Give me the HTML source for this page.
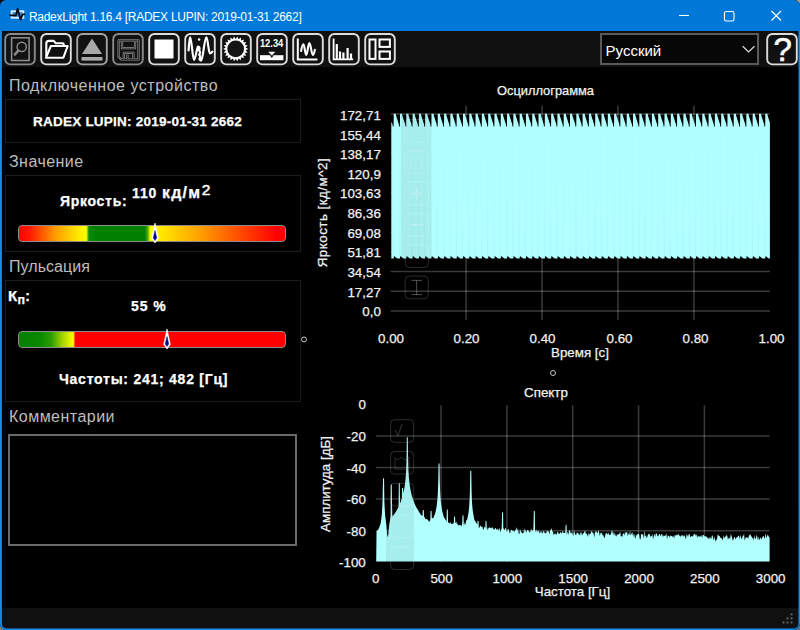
<!DOCTYPE html>
<html lang="ru">
<head>
<meta charset="utf-8">
<title>RadexLight 1.16.4 [RADEX LUPIN: 2019-01-31 2662]</title>
<style>
html,body{margin:0;padding:0;width:800px;height:630px;overflow:hidden;background:#3a3a3a;}
body{font-family:"Liberation Sans",sans-serif;color:#fff;position:relative;}
#win{position:absolute;left:0;top:0;width:800px;height:630px;background:#000;border-radius:6px;overflow:hidden;}
#frame{position:absolute;left:0;top:0;z-index:50;pointer-events:none;}
.cn{position:absolute;width:10px;height:10px;}
#titlebar{position:absolute;left:0;top:0;width:800px;height:31px;background:#0078d7;border-bottom:0.5px solid #0a4a80}
#title{position:absolute;left:28.9px;top:8.5px;font-size:12px;line-height:16px;white-space:nowrap;color:#fff;letter-spacing:-0.27px;}
.abs{position:absolute;white-space:nowrap;}
#toolbar{position:absolute;left:1px;top:31px;width:798px;height:35.6px;background:#101010;}
.tb{position:absolute;top:33px;width:33px;height:33px;}
#combo{position:absolute;left:600px;top:33px;width:155px;height:28px;border:2px solid #595959;background:#070707;}
#combo span{position:absolute;left:3.6px;top:7px;font-size:15px;line-height:18px;color:#fff;}
.hdr{position:absolute;left:9px;font-size:16px;line-height:20px;color:#bdbdbd;white-space:nowrap;}
.grp{position:absolute;left:5px;width:294px;border:1px solid #1c1c1c;}
.b{font-weight:700;color:#fff;-webkit-text-stroke:0.25px #fff;}
.bar{position:absolute;left:18px;width:266px;height:15px;border:1.5px solid #8c8c8c;border-radius:4px;}
#status{position:absolute;left:1px;top:607.5px;width:798px;height:22px;background:#101010;}
#comment{position:absolute;left:8px;top:434px;width:284.5px;height:107.5px;border:2px solid #6a6a6a;}
svg text{font-family:"Liberation Sans",sans-serif;}
#charts text{stroke:#f2f2f2;stroke-width:0.25px;}
</style>
</head>
<body>
<div class="cn" style="left:0;top:0;background:#0a0a0a"></div><div class="cn" style="right:0;top:0;background:#b89a78"></div><div class="cn" style="left:0;bottom:0;background:#8a8078"></div><div class="cn" style="right:0;bottom:0;background:#6a7480"></div>
<div id="win">
<div id="titlebar"></div>
<svg class="abs" style="left:0;top:0" width="800" height="32" viewBox="0 0 800 32"><rect x="11.6" y="11.2" width="11.8" height="6.6" fill="#ffffff" fill-opacity="0.18" stroke="#dcecfc" stroke-width="1.8"/><path d="M9.4 15.3 H16 L17.6 8.8 L20.5 19.6 L22.6 14.4 H25" fill="none" stroke="#0a0a14" stroke-width="1.8" stroke-linejoin="round"/><path d="M679 15.5 H689" stroke="#fff" stroke-width="1"/><rect x="724.5" y="11.5" width="9.5" height="9.5" rx="1.8" fill="none" stroke="#fff" stroke-width="1.1"/><path d="M771.5 11 L781 20.5 M781 11 L771.5 20.5" stroke="#fff" stroke-width="1.1"/></svg>
<div id="title">RadexLight 1.16.4 [RADEX LUPIN: 2019-01-31 2662]</div>
<div id="toolbar"></div>
<svg class="tb" style="left:4px" width="33" height="33" viewBox="0 0 33 33"><rect x="1.2" y="1" width="29.6" height="30.4" rx="5.2" fill="#111" stroke="#8a8a8a" stroke-width="1.9"/><rect x="7.6" y="4.8" width="17.5" height="22.7" fill="none" stroke="#8a8a8a" stroke-width="1.6"/><circle cx="17.7" cy="13.9" r="4.6" fill="none" stroke="#8a8a8a" stroke-width="1.5"/><path d="M14.4 17.4 L10.8 21.6" stroke="#8a8a8a" stroke-width="2.4" stroke-linecap="round" fill="none"/></svg>
<svg class="tb" style="left:40px" width="33" height="33" viewBox="0 0 33 33"><rect x="1.2" y="1" width="29.6" height="30.4" rx="5.2" fill="#111" stroke="#dcdcdc" stroke-width="1.9"/><path d="M6.3 23.2 V10.4 Q6.3 7.9 9 7.9 H13.8 L15.8 10.3 H22.8 Q23.7 10.3 23.7 11.2 V12.6" fill="none" stroke="#fff" stroke-width="2.1" stroke-linejoin="round"/><path d="M5.9 24.8 L10.9 13 H27.7 L23.3 24.8 Z" fill="none" stroke="#fff" stroke-width="2.1" stroke-linejoin="round"/></svg>
<svg class="tb" style="left:76px" width="33" height="33" viewBox="0 0 33 33"><rect x="1.2" y="1" width="29.6" height="30.4" rx="5.2" fill="#111" stroke="#a2a2a2" stroke-width="1.9"/><path d="M16 5.5 L26 21 H6 Z" fill="#a8a8a8"/><rect x="5.5" y="24" width="21" height="3.6" fill="#a8a8a8"/></svg>
<svg class="tb" style="left:112px" width="33" height="33" viewBox="0 0 33 33"><rect x="1.2" y="1" width="29.6" height="30.4" rx="5.2" fill="#111" stroke="#8a8a8a" stroke-width="1.9"/><path d="M6.6 7.3 H26.5 V26.5 H9.2 L6.6 23.9 Z" fill="none" stroke="#909090" stroke-width="2.2" stroke-linejoin="round"/><path d="M10 7.3 V15.2 H23 V7.3" fill="none" stroke="#909090" stroke-width="2.2" stroke-linejoin="round"/><path d="M11.8 26.5 V19.8 H21.4 V26.5" fill="none" stroke="#909090" stroke-width="2.2" stroke-linejoin="round"/><path d="M15.4 21.4 V26.5" fill="none" stroke="#909090" stroke-width="2.2" stroke-linejoin="round"/><path d="M6.6 7.3 H26.5 V26.5 H9.2 L6.6 23.9 Z" fill="none" stroke="#1a1a1a" stroke-width="0.8" stroke-linejoin="round"/><path d="M10 7.3 V15.2 H23 V7.3" fill="none" stroke="#1a1a1a" stroke-width="0.8" stroke-linejoin="round"/><path d="M11.8 26.5 V19.8 H21.4 V26.5" fill="none" stroke="#1a1a1a" stroke-width="0.8" stroke-linejoin="round"/><path d="M15.4 21.4 V26.5" fill="none" stroke="#1a1a1a" stroke-width="0.8" stroke-linejoin="round"/></svg>
<svg class="tb" style="left:148px" width="33" height="33" viewBox="0 0 33 33"><rect x="1.2" y="1" width="29.6" height="30.4" rx="5.2" fill="#111" stroke="#dcdcdc" stroke-width="1.9"/><rect x="6.5" y="6.5" width="19" height="19" fill="#fff"/></svg>
<svg class="tb" style="left:184px" width="33" height="33" viewBox="0 0 33 33"><rect x="1.2" y="1" width="29.6" height="30.4" rx="5.2" fill="#111" stroke="#dcdcdc" stroke-width="1.9"/><path d="M4.6 17.5 C5.2 10 5.4 4.4 6.2 4.4 C7.6 4.4 8.6 27 10 27 C11.4 27 12.4 16.5 14 13.6 C16 14 16 16.2 14.6 17.2 C16.4 17.8 16.6 20.6 15 21.6 C16.4 22.4 16.4 25 15.4 26 C15.8 27.2 16.4 27.6 17.1 27.6 C19 27.6 20.4 4.4 22.3 4.4 C24 4.4 24.4 20.4 26 20.4 C27.2 20.4 27.6 19.6 28.3 18.6" fill="none" stroke="#fff" stroke-width="2.2" stroke-linecap="round" stroke-linejoin="round"/><circle cx="15.1" cy="6.6" r="1.25" fill="#fff"/></svg>
<svg class="tb" style="left:220px" width="33" height="33" viewBox="0 0 33 33"><rect x="1.2" y="1" width="29.6" height="30.4" rx="5.2" fill="#111" stroke="#dcdcdc" stroke-width="1.9"/><path d="M28.20 15.90 L25.60 17.32 L27.69 19.42 L24.80 20.05 L26.22 22.66 L23.26 22.45 L23.89 25.35 L21.11 24.31 L20.89 27.27 L18.52 25.49 L17.48 28.27 L15.70 25.90 L13.92 28.27 L12.88 25.49 L10.51 27.27 L10.29 24.31 L7.51 25.35 L8.14 22.45 L5.18 22.66 L6.60 20.05 L3.71 19.42 L5.80 17.32 L3.20 15.90 L5.80 14.48 L3.71 12.38 L6.60 11.75 L5.18 9.14 L8.14 9.35 L7.51 6.45 L10.29 7.49 L10.51 4.53 L12.88 6.31 L13.92 3.53 L15.70 5.90 L17.48 3.53 L18.52 6.31 L20.89 4.53 L21.11 7.49 L23.89 6.45 L23.26 9.35 L26.22 9.14 L24.80 11.75 L27.69 12.38 L25.60 14.48 Z" fill="#fff"/><circle cx="15.7" cy="15.9" r="8.4" fill="#141414"/></svg>
<svg class="tb" style="left:256px" width="33" height="33" viewBox="0 0 33 33"><rect x="1.2" y="1" width="29.6" height="30.4" rx="5.2" fill="#111" stroke="#dcdcdc" stroke-width="1.9"/><text x="15.6" y="13.7" font-size="10.8" font-weight="700" fill="#fff" text-anchor="middle" textLength="23.4" lengthAdjust="spacingAndGlyphs">12.34</text><rect x="4" y="22.2" width="23.4" height="5" fill="#fff"/><path d="M12.2 18.8 H19.4 L15.8 22.6 Z" fill="#fff"/><path d="M13.8 22.2 H17.8 L15.8 25 Z" fill="#111"/></svg>
<svg class="tb" style="left:292px" width="33" height="33" viewBox="0 0 33 33"><rect x="1.2" y="1" width="29.6" height="30.4" rx="5.2" fill="#111" stroke="#dcdcdc" stroke-width="1.9"/><path d="M5.8 5.6 V26.4 H25.4" fill="none" stroke="#fff" stroke-width="2"/><path d="M9.1 18 C9.8 14 10.4 11.3 11.4 11.3 C12.6 11.3 13 21.9 14.2 21.9 C15.6 21.9 16 10.1 17.4 10.1 C18.8 10.1 19.4 21.9 20.9 21.9 C21.8 21.9 22.4 19 22.9 16.7" fill="none" stroke="#fff" stroke-width="2.1" stroke-linecap="round"/></svg>
<svg class="tb" style="left:328px" width="33" height="33" viewBox="0 0 33 33"><rect x="1.2" y="1" width="29.6" height="30.4" rx="5.2" fill="#111" stroke="#dcdcdc" stroke-width="1.9"/><path d="M5.6 5.5 V26.4 H25.2" fill="none" stroke="#fff" stroke-width="1.8"/><path d="M8.8 26 V11 M12 26 V18.6 M15.4 26 V19.6 M19.6 26 V15 M23 26 V20.6" fill="none" stroke="#fff" stroke-width="2.2"/></svg>
<svg class="tb" style="left:364px" width="33" height="33" viewBox="0 0 33 33"><rect x="1.2" y="1" width="29.6" height="30.4" rx="5.2" fill="#111" stroke="#dcdcdc" stroke-width="1.9"/><rect x="5.5" y="6.5" width="6" height="19.4" fill="none" stroke="#fff" stroke-width="2"/><rect x="15.5" y="6.5" width="10.4" height="7.4" fill="none" stroke="#fff" stroke-width="2"/><rect x="15.5" y="18.5" width="10.4" height="7.4" fill="none" stroke="#fff" stroke-width="2"/></svg>
<svg class="tb" style="left:766px" width="33" height="33" viewBox="0 0 33 33"><rect x="1.2" y="1" width="29.6" height="30.4" rx="5.2" fill="#111" stroke="#dcdcdc" stroke-width="1.9"/><text x="16.6" y="28.3" font-size="33" font-weight="400" fill="#fff" stroke="#fff" stroke-width="0.6" text-anchor="middle">?</text></svg>
<div id="combo"><span>Русский</span><svg class="abs" style="left:138px;top:7px" width="18" height="14" viewBox="0 0 18 14"><path d="M2.7 4.2 L8.6 9.9 L14.5 4.2" fill="none" stroke="#d8d8d8" stroke-width="1.3"/></svg></div>
<div class="hdr" style="top:76px;letter-spacing:0.52px">Подключенное устройство</div>
<div class="grp" style="top:99px;height:42px"></div>
<div class="abs b" style="left:33px;top:112px;font-size:13.5px;line-height:20px;letter-spacing:0.23px">RADEX LUPIN: 2019-01-31 2662</div>
<div class="hdr" style="top:152px;letter-spacing:0.45px">Значение</div>
<div class="grp" style="top:175px;height:75px"></div>
<div class="abs b" style="left:60px;top:191px;font-size:14px;line-height:20px;letter-spacing:0.7px">Яркость:</div>
<div class="abs b" style="left:132px;top:183px;font-size:14px;line-height:20px;letter-spacing:0.9px">110 <span style="font-size:16px;letter-spacing:1.15px">кд/м</span><span style="font-size:15.5px;font-weight:400;position:relative;top:-3.2px;left:0.5px;letter-spacing:0;-webkit-text-stroke:0.5px #fff">2</span></div>
<div class="bar" style="top:225px;background:linear-gradient(90deg,#ff0000 0%,#ff1a00 4%,#ffa000 14%,#ffe600 22%,#ffff00 25.3%,#0a8a0a 26.3%,#008000 29%,#008000 47.3%,#4aa800 48.3%,#ffff00 49.4%,#ffe000 55%,#ffa000 68%,#ff5000 82%,#ff0000 97%)"></div>
<svg class="abs" style="left:149.6px;top:223px" width="10" height="21" viewBox="0 0 10 21"><path d="M5 0.2 L8.2 15.2 L5 19.9 L1.8 15.2 Z" fill="#fff" stroke="#fff" stroke-width="0.8" stroke-linejoin="round"/><path d="M5 7.6 L6.7 15 L5 17.4 L3.3 15 Z" fill="#00008b" stroke="#00008b" stroke-width="0.5" stroke-linejoin="round"/></svg>
<div class="hdr" style="top:257px;letter-spacing:0.05px">Пульсация</div>
<div class="grp" style="top:280px;height:120px"></div>
<div class="abs b" style="left:8px;top:286px;font-size:14px;line-height:20px;letter-spacing:0.3px"><span style="font-size:15px">К</span><span style="font-size:12.5px;position:relative;top:3px">п</span>:</div>
<div class="abs b" style="left:131px;top:296px;font-size:14px;line-height:20px;letter-spacing:0.9px">55 %</div>
<div class="bar" style="top:331px;background:linear-gradient(90deg,#008000 0%,#0a8a00 8%,#2a9c00 12%,#9ad000 16%,#ffff00 20.4%,#ff0000 21.2%,#ff0000 100%)"></div>
<svg class="abs" style="left:161.6px;top:329px" width="10" height="21" viewBox="0 0 10 21"><path d="M5 0.2 L8.2 15.2 L5 19.9 L1.8 15.2 Z" fill="#fff" stroke="#fff" stroke-width="0.8" stroke-linejoin="round"/><path d="M5 7.6 L6.7 15 L5 17.4 L3.3 15 Z" fill="#00008b" stroke="#00008b" stroke-width="0.5" stroke-linejoin="round"/></svg>
<div class="abs b" style="left:59px;top:369px;font-size:14px;line-height:20px;letter-spacing:0.75px">Частоты: 241; 482 [Гц]</div>
<div class="hdr" style="top:407px;letter-spacing:0.47px">Комментарии</div>
<div id="comment"></div>
<svg id="charts" class="abs" style="left:0;top:0" width="800" height="630" viewBox="0 0 800 630">
<path d="M390.70000000000005 113.90 H769.9" stroke="#ffffff" stroke-opacity="0.23" stroke-width="1.5"/>
<path d="M390.70000000000005 133.61 H769.9" stroke="#ffffff" stroke-opacity="0.23" stroke-width="1.5"/>
<path d="M390.70000000000005 153.32 H769.9" stroke="#ffffff" stroke-opacity="0.23" stroke-width="1.5"/>
<path d="M390.70000000000005 173.03 H769.9" stroke="#ffffff" stroke-opacity="0.23" stroke-width="1.5"/>
<path d="M390.70000000000005 192.74 H769.9" stroke="#ffffff" stroke-opacity="0.23" stroke-width="1.5"/>
<path d="M390.70000000000005 212.45 H769.9" stroke="#ffffff" stroke-opacity="0.23" stroke-width="1.5"/>
<path d="M390.70000000000005 232.16 H769.9" stroke="#ffffff" stroke-opacity="0.23" stroke-width="1.5"/>
<path d="M390.70000000000005 251.87 H769.9" stroke="#ffffff" stroke-opacity="0.23" stroke-width="1.5"/>
<path d="M390.70000000000005 271.58 H769.9" stroke="#ffffff" stroke-opacity="0.23" stroke-width="1.5"/>
<path d="M390.70000000000005 291.29 H769.9" stroke="#ffffff" stroke-opacity="0.23" stroke-width="1.5"/>
<path d="M390.70000000000005 311.00 H769.9" stroke="#ffffff" stroke-opacity="0.23" stroke-width="1.5"/>
<path d="M466.06 105.5 V320" stroke="#ffffff" stroke-opacity="0.23" stroke-width="1.5"/>
<path d="M542.02 105.5 V320" stroke="#ffffff" stroke-opacity="0.23" stroke-width="1.5"/>
<path d="M617.98 105.5 V320" stroke="#ffffff" stroke-opacity="0.23" stroke-width="1.5"/>
<path d="M693.94 105.5 V320" stroke="#ffffff" stroke-opacity="0.23" stroke-width="1.5"/>
<path d="M391.30 258.60 L391.30 121.80 L392.62 124.50 L392.72 126.60 L393.62 126.60 L393.72 113.70 L395.82 113.70 L396.02 115.60 L398.91 124.50 L399.01 126.60 L399.91 126.60 L400.01 113.70 L402.11 113.70 L402.31 115.60 L405.21 124.50 L405.31 126.60 L406.21 126.60 L406.31 113.70 L408.41 113.70 L408.61 115.60 L411.51 124.50 L411.61 126.60 L412.51 126.60 L412.61 113.70 L414.71 113.70 L414.91 115.60 L417.81 124.50 L417.91 126.60 L418.81 126.60 L418.91 113.70 L421.01 113.70 L421.21 115.60 L424.11 124.50 L424.21 126.60 L425.11 126.60 L425.21 113.70 L427.31 113.70 L427.51 115.60 L430.40 124.50 L430.50 126.60 L431.40 126.60 L431.50 113.70 L433.60 113.70 L433.80 115.60 L436.70 124.50 L436.80 126.60 L437.70 126.60 L437.80 113.70 L439.90 113.70 L440.10 115.60 L443.00 124.50 L443.10 126.60 L444.00 126.60 L444.10 113.70 L446.20 113.70 L446.40 115.60 L449.30 124.50 L449.40 126.60 L450.30 126.60 L450.40 113.70 L452.50 113.70 L452.70 115.60 L455.60 124.50 L455.70 126.60 L456.60 126.60 L456.70 113.70 L458.80 113.70 L459.00 115.60 L461.89 124.50 L461.99 126.60 L462.89 126.60 L462.99 113.70 L465.09 113.70 L465.29 115.60 L468.19 124.50 L468.29 126.60 L469.19 126.60 L469.29 113.70 L471.39 113.70 L471.59 115.60 L474.49 124.50 L474.59 126.60 L475.49 126.60 L475.59 113.70 L477.69 113.70 L477.89 115.60 L480.79 124.50 L480.89 126.60 L481.79 126.60 L481.89 113.70 L483.99 113.70 L484.19 115.60 L487.09 124.50 L487.19 126.60 L488.09 126.60 L488.19 113.70 L490.29 113.70 L490.49 115.60 L493.38 124.50 L493.48 126.60 L494.38 126.60 L494.48 113.70 L496.58 113.70 L496.78 115.60 L499.68 124.50 L499.78 126.60 L500.68 126.60 L500.78 113.70 L502.88 113.70 L503.08 115.60 L505.98 124.50 L506.08 126.60 L506.98 126.60 L507.08 113.70 L509.18 113.70 L509.38 115.60 L512.28 124.50 L512.38 126.60 L513.28 126.60 L513.38 113.70 L515.48 113.70 L515.68 115.60 L518.58 124.50 L518.68 126.60 L519.58 126.60 L519.68 113.70 L521.78 113.70 L521.98 115.60 L524.87 124.50 L524.97 126.60 L525.87 126.60 L525.97 113.70 L528.07 113.70 L528.27 115.60 L531.17 124.50 L531.27 126.60 L532.17 126.60 L532.27 113.70 L534.37 113.70 L534.57 115.60 L537.47 124.50 L537.57 126.60 L538.47 126.60 L538.57 113.70 L540.67 113.70 L540.87 115.60 L543.77 124.50 L543.87 126.60 L544.77 126.60 L544.87 113.70 L546.97 113.70 L547.17 115.60 L550.07 124.50 L550.17 126.60 L551.07 126.60 L551.17 113.70 L553.27 113.70 L553.47 115.60 L556.36 124.50 L556.46 126.60 L557.36 126.60 L557.46 113.70 L559.56 113.70 L559.76 115.60 L562.66 124.50 L562.76 126.60 L563.66 126.60 L563.76 113.70 L565.86 113.70 L566.06 115.60 L568.96 124.50 L569.06 126.60 L569.96 126.60 L570.06 113.70 L572.16 113.70 L572.36 115.60 L575.26 124.50 L575.36 126.60 L576.26 126.60 L576.36 113.70 L578.46 113.70 L578.66 115.60 L581.56 124.50 L581.66 126.60 L582.56 126.60 L582.66 113.70 L584.76 113.70 L584.96 115.60 L587.85 124.50 L587.95 126.60 L588.85 126.60 L588.95 113.70 L591.05 113.70 L591.25 115.60 L594.15 124.50 L594.25 126.60 L595.15 126.60 L595.25 113.70 L597.35 113.70 L597.55 115.60 L600.45 124.50 L600.55 126.60 L601.45 126.60 L601.55 113.70 L603.65 113.70 L603.85 115.60 L606.75 124.50 L606.85 126.60 L607.75 126.60 L607.85 113.70 L609.95 113.70 L610.15 115.60 L613.05 124.50 L613.15 126.60 L614.05 126.60 L614.15 113.70 L616.25 113.70 L616.45 115.60 L619.34 124.50 L619.44 126.60 L620.34 126.60 L620.44 113.70 L622.54 113.70 L622.74 115.60 L625.64 124.50 L625.74 126.60 L626.64 126.60 L626.74 113.70 L628.84 113.70 L629.04 115.60 L631.94 124.50 L632.04 126.60 L632.94 126.60 L633.04 113.70 L635.14 113.70 L635.34 115.60 L638.24 124.50 L638.34 126.60 L639.24 126.60 L639.34 113.70 L641.44 113.70 L641.64 115.60 L644.54 124.50 L644.64 126.60 L645.54 126.60 L645.64 113.70 L647.74 113.70 L647.94 115.60 L650.83 124.50 L650.93 126.60 L651.83 126.60 L651.93 113.70 L654.03 113.70 L654.23 115.60 L657.13 124.50 L657.23 126.60 L658.13 126.60 L658.23 113.70 L660.33 113.70 L660.53 115.60 L663.43 124.50 L663.53 126.60 L664.43 126.60 L664.53 113.70 L666.63 113.70 L666.83 115.60 L669.73 124.50 L669.83 126.60 L670.73 126.60 L670.83 113.70 L672.93 113.70 L673.13 115.60 L676.03 124.50 L676.13 126.60 L677.03 126.60 L677.13 113.70 L679.23 113.70 L679.43 115.60 L682.32 124.50 L682.42 126.60 L683.32 126.60 L683.42 113.70 L685.52 113.70 L685.72 115.60 L688.62 124.50 L688.72 126.60 L689.62 126.60 L689.72 113.70 L691.82 113.70 L692.02 115.60 L694.92 124.50 L695.02 126.60 L695.92 126.60 L696.02 113.70 L698.12 113.70 L698.32 115.60 L701.22 124.50 L701.32 126.60 L702.22 126.60 L702.32 113.70 L704.42 113.70 L704.62 115.60 L707.52 124.50 L707.62 126.60 L708.52 126.60 L708.62 113.70 L710.72 113.70 L710.92 115.60 L713.81 124.50 L713.91 126.60 L714.81 126.60 L714.91 113.70 L717.01 113.70 L717.21 115.60 L720.11 124.50 L720.21 126.60 L721.11 126.60 L721.21 113.70 L723.31 113.70 L723.51 115.60 L726.41 124.50 L726.51 126.60 L727.41 126.60 L727.51 113.70 L729.61 113.70 L729.81 115.60 L732.71 124.50 L732.81 126.60 L733.71 126.60 L733.81 113.70 L735.91 113.70 L736.11 115.60 L739.01 124.50 L739.11 126.60 L740.01 126.60 L740.11 113.70 L742.21 113.70 L742.41 115.60 L745.30 124.50 L745.40 126.60 L746.30 126.60 L746.40 113.70 L748.50 113.70 L748.70 115.60 L751.60 124.50 L751.70 126.60 L752.60 126.60 L752.70 113.70 L754.80 113.70 L755.00 115.60 L757.90 124.50 L758.00 126.60 L758.90 126.60 L759.00 113.70 L761.10 113.70 L761.30 115.60 L764.20 124.50 L764.30 126.60 L765.20 126.60 L765.30 113.70 L767.40 113.70 L767.60 115.60 L769.90 122.67 L769.90 258.60 L768.80 258.50 L765.60 256.00 L765.20 258.60 L762.50 258.50 L759.30 256.00 L758.90 258.60 L756.20 258.50 L753.00 256.00 L752.60 258.60 L749.90 258.50 L746.70 256.00 L746.30 258.60 L743.61 258.50 L740.41 256.00 L740.01 258.60 L737.31 258.50 L734.11 256.00 L733.71 258.60 L731.01 258.50 L727.81 256.00 L727.41 258.60 L724.71 258.50 L721.51 256.00 L721.11 258.60 L718.41 258.50 L715.21 256.00 L714.81 258.60 L712.12 258.50 L708.92 256.00 L708.52 258.60 L705.82 258.50 L702.62 256.00 L702.22 258.60 L699.52 258.50 L696.32 256.00 L695.92 258.60 L693.22 258.50 L690.02 256.00 L689.62 258.60 L686.92 258.50 L683.72 256.00 L683.32 258.60 L680.63 258.50 L677.43 256.00 L677.03 258.60 L674.33 258.50 L671.13 256.00 L670.73 258.60 L668.03 258.50 L664.83 256.00 L664.43 258.60 L661.73 258.50 L658.53 256.00 L658.13 258.60 L655.43 258.50 L652.23 256.00 L651.83 258.60 L649.14 258.50 L645.94 256.00 L645.54 258.60 L642.84 258.50 L639.64 256.00 L639.24 258.60 L636.54 258.50 L633.34 256.00 L632.94 258.60 L630.24 258.50 L627.04 256.00 L626.64 258.60 L623.94 258.50 L620.74 256.00 L620.34 258.60 L617.65 258.50 L614.45 256.00 L614.05 258.60 L611.35 258.50 L608.15 256.00 L607.75 258.60 L605.05 258.50 L601.85 256.00 L601.45 258.60 L598.75 258.50 L595.55 256.00 L595.15 258.60 L592.45 258.50 L589.25 256.00 L588.85 258.60 L586.16 258.50 L582.96 256.00 L582.56 258.60 L579.86 258.50 L576.66 256.00 L576.26 258.60 L573.56 258.50 L570.36 256.00 L569.96 258.60 L567.26 258.50 L564.06 256.00 L563.66 258.60 L560.96 258.50 L557.76 256.00 L557.36 258.60 L554.67 258.50 L551.47 256.00 L551.07 258.60 L548.37 258.50 L545.17 256.00 L544.77 258.60 L542.07 258.50 L538.87 256.00 L538.47 258.60 L535.77 258.50 L532.57 256.00 L532.17 258.60 L529.47 258.50 L526.27 256.00 L525.87 258.60 L523.18 258.50 L519.98 256.00 L519.58 258.60 L516.88 258.50 L513.68 256.00 L513.28 258.60 L510.58 258.50 L507.38 256.00 L506.98 258.60 L504.28 258.50 L501.08 256.00 L500.68 258.60 L497.98 258.50 L494.78 256.00 L494.38 258.60 L491.69 258.50 L488.49 256.00 L488.09 258.60 L485.39 258.50 L482.19 256.00 L481.79 258.60 L479.09 258.50 L475.89 256.00 L475.49 258.60 L472.79 258.50 L469.59 256.00 L469.19 258.60 L466.49 258.50 L463.29 256.00 L462.89 258.60 L460.20 258.50 L457.00 256.00 L456.60 258.60 L453.90 258.50 L450.70 256.00 L450.30 258.60 L447.60 258.50 L444.40 256.00 L444.00 258.60 L441.30 258.50 L438.10 256.00 L437.70 258.60 L435.00 258.50 L431.80 256.00 L431.40 258.60 L428.71 258.50 L425.51 256.00 L425.11 258.60 L422.41 258.50 L419.21 256.00 L418.81 258.60 L416.11 258.50 L412.91 256.00 L412.51 258.60 L409.81 258.50 L406.61 256.00 L406.21 258.60 L403.51 258.50 L400.31 256.00 L399.91 258.60 L397.22 258.50 L394.02 256.00 L393.62 258.60 L391.30 258.60 Z" fill="#b2ffff"/>
<defs><linearGradient id="stk" gradientUnits="userSpaceOnUse" x1="0" y1="127" x2="0" y2="257"><stop offset="0" stop-color="#207070" stop-opacity="0.008"/><stop offset="0.5" stop-color="#207070" stop-opacity="0.025"/><stop offset="1" stop-color="#207070" stop-opacity="0.06"/></linearGradient></defs>
<path d="M393.32 127 V257 M399.61 127 V257 M405.91 127 V257 M412.21 127 V257 M418.51 127 V257 M424.81 127 V257 M431.10 127 V257 M437.40 127 V257 M443.70 127 V257 M450.00 127 V257 M456.30 127 V257 M462.59 127 V257 M468.89 127 V257 M475.19 127 V257 M481.49 127 V257 M487.79 127 V257 M494.08 127 V257 M500.38 127 V257 M506.68 127 V257 M512.98 127 V257 M519.28 127 V257 M525.57 127 V257 M531.87 127 V257 M538.17 127 V257 M544.47 127 V257 M550.77 127 V257 M557.06 127 V257 M563.36 127 V257 M569.66 127 V257 M575.96 127 V257 M582.26 127 V257 M588.55 127 V257 M594.85 127 V257 M601.15 127 V257 M607.45 127 V257 M613.75 127 V257 M620.04 127 V257 M626.34 127 V257 M632.64 127 V257 M638.94 127 V257 M645.24 127 V257 M651.53 127 V257 M657.83 127 V257 M664.13 127 V257 M670.43 127 V257 M676.73 127 V257 M683.02 127 V257 M689.32 127 V257 M695.62 127 V257 M701.92 127 V257 M708.22 127 V257 M714.51 127 V257 M720.81 127 V257 M727.11 127 V257 M733.41 127 V257 M739.71 127 V257 M746.00 127 V257 M752.30 127 V257 M758.60 127 V257 M764.90 127 V257" stroke="url(#stk)" stroke-width="1" fill="none"/>
<rect x="400.8" y="114" width="30.5" height="192" fill="#000" fill-opacity="0.065"/>
<rect x="405.2" y="119.5" width="23" height="22.8" rx="4" fill="none" stroke="#fff" stroke-opacity="0.17" stroke-width="1"/>
<rect x="405.2" y="150.8" width="23" height="22.8" rx="4" fill="none" stroke="#fff" stroke-opacity="0.17" stroke-width="1"/>
<rect x="405.2" y="182.1" width="23" height="22.8" rx="4" fill="none" stroke="#fff" stroke-opacity="0.17" stroke-width="1"/>
<rect x="405.2" y="213.4" width="23" height="22.8" rx="4" fill="none" stroke="#fff" stroke-opacity="0.17" stroke-width="1"/>
<rect x="405.2" y="244.7" width="23" height="22.8" rx="4" fill="none" stroke="#fff" stroke-opacity="0.17" stroke-width="1"/>
<rect x="405.2" y="276.0" width="23" height="22.8" rx="4" fill="none" stroke="#fff" stroke-opacity="0.17" stroke-width="1"/>
<path d="M410.2 193.5 H423.2 M416.7 187 V200" stroke="#fff" stroke-opacity="0.22" stroke-width="1.5"/>
<path d="M410.2 224.8 H423.2" stroke="#fff" stroke-opacity="0.22" stroke-width="1.5"/>
<path d="M411.5 280.4 H422 M411.5 294.6 H422 M416.7 280.4 V294.6" stroke="#fff" stroke-opacity="0.3" stroke-width="1"/>
<path d="M411 157 H418 L421.5 160 V168 H411 Z" fill="none" stroke="#fff" stroke-opacity="0.16"/>
<text x="380.8" y="119.90" font-size="13.33" fill="#f2f2f2" text-anchor="end">172,71</text>
<text x="380.8" y="139.53" font-size="13.33" fill="#f2f2f2" text-anchor="end">155,44</text>
<text x="380.8" y="159.16" font-size="13.33" fill="#f2f2f2" text-anchor="end">138,17</text>
<text x="380.8" y="178.79" font-size="13.33" fill="#f2f2f2" text-anchor="end">120,9</text>
<text x="380.8" y="198.42" font-size="13.33" fill="#f2f2f2" text-anchor="end">103,63</text>
<text x="380.8" y="218.05" font-size="13.33" fill="#f2f2f2" text-anchor="end">86,36</text>
<text x="380.8" y="237.68" font-size="13.33" fill="#f2f2f2" text-anchor="end">69,08</text>
<text x="380.8" y="257.31" font-size="13.33" fill="#f2f2f2" text-anchor="end">51,81</text>
<text x="380.8" y="276.94" font-size="13.33" fill="#f2f2f2" text-anchor="end">34,54</text>
<text x="380.8" y="296.57" font-size="13.33" fill="#f2f2f2" text-anchor="end">17,27</text>
<text x="380.8" y="316.20" font-size="13.33" fill="#f2f2f2" text-anchor="end">0,0</text>
<text x="391.00" y="343" font-size="13.33" fill="#f2f2f2" text-anchor="middle">0.00</text>
<text x="466.50" y="343" font-size="13.33" fill="#f2f2f2" text-anchor="middle">0.20</text>
<text x="542.50" y="343" font-size="13.33" fill="#f2f2f2" text-anchor="middle">0.40</text>
<text x="619.50" y="343" font-size="13.33" fill="#f2f2f2" text-anchor="middle">0.60</text>
<text x="695.50" y="343" font-size="13.33" fill="#f2f2f2" text-anchor="middle">0.80</text>
<text x="771.50" y="343" font-size="13.33" fill="#f2f2f2" text-anchor="middle">1.00</text>
<text x="580" y="357" font-size="13.33" fill="#f2f2f2" text-anchor="middle">Время [с]</text>
<text x="545.5" y="94.8" font-size="13.33" fill="#f2f2f2" text-anchor="middle" textLength="97" lengthAdjust="spacingAndGlyphs">Осциллограмма</text>
<text transform="translate(327.2 212.6) rotate(-90)" font-size="13.33" fill="#f2f2f2" text-anchor="middle" letter-spacing="0.5">Яркость [кд/м^2]</text>
<path d="M375.8 436.01 H769.6" stroke="#ffffff" stroke-opacity="0.23" stroke-width="1.5"/>
<path d="M375.8 467.55 H769.6" stroke="#ffffff" stroke-opacity="0.23" stroke-width="1.5"/>
<path d="M375.8 499.09 H769.6" stroke="#ffffff" stroke-opacity="0.23" stroke-width="1.5"/>
<path d="M375.8 530.63 H769.6" stroke="#ffffff" stroke-opacity="0.23" stroke-width="1.5"/>
<path d="M441.03 405.3 V562" stroke="#ffffff" stroke-opacity="0.23" stroke-width="1.5"/>
<path d="M506.87 405.3 V562" stroke="#ffffff" stroke-opacity="0.23" stroke-width="1.5"/>
<path d="M572.70 405.3 V562" stroke="#ffffff" stroke-opacity="0.23" stroke-width="1.5"/>
<path d="M638.53 405.3 V562" stroke="#ffffff" stroke-opacity="0.23" stroke-width="1.5"/>
<path d="M704.37 405.3 V562" stroke="#ffffff" stroke-opacity="0.23" stroke-width="1.5"/>
<path d="M376.20 561.4 L376.55 531.2 L376.80 530.9 L377.05 530.7 L377.30 530.5 L377.55 530.3 L377.80 530.2 L378.05 529.9 L378.30 529.4 L378.55 528.8 L378.80 528.4 L379.05 527.9 L379.30 527.3 L379.55 526.8 L379.80 526.1 L380.05 525.3 L380.30 524.6 L380.55 523.7 L380.80 522.5 L381.05 520.9 L381.30 519.1 L381.55 517.0 L381.80 514.4 L382.05 511.1 L382.30 506.7 L382.55 500.3 L382.80 488.4 L383.05 478.3 L383.30 478.3 L383.55 478.3 L383.80 478.3 L384.05 478.3 L384.30 498.6 L384.55 505.7 L384.80 510.3 L385.05 513.8 L385.30 516.4 L385.55 518.5 L385.80 520.5 L386.05 522.5 L386.30 524.6 L386.55 527.1 L386.80 529.9 L387.05 532.8 L387.30 535.2 L387.55 536.6 L387.80 537.0 L388.05 536.1 L388.30 534.2 L388.55 531.6 L388.80 528.9 L389.05 526.4 L389.30 524.3 L389.55 522.6 L389.80 521.2 L390.05 520.0 L390.30 518.4 L390.55 515.1 L390.80 484.6 L391.05 484.6 L391.30 484.6 L391.55 484.6 L391.80 484.6 L392.05 504.9 L392.30 514.5 L392.55 516.6 L392.80 516.5 L393.05 516.1 L393.30 515.6 L393.55 515.2 L393.80 514.8 L394.05 514.3 L394.30 514.0 L394.55 513.7 L394.80 513.4 L395.05 513.0 L395.30 512.6 L395.55 512.2 L395.80 511.8 L396.05 511.4 L396.30 510.9 L396.55 510.5 L396.80 510.1 L397.05 509.6 L397.30 509.2 L397.55 508.8 L397.80 508.3 L398.05 507.8 L398.30 507.2 L398.55 506.3 L398.80 483.3 L399.05 483.3 L399.30 483.3 L399.55 483.3 L399.80 483.3 L400.05 503.4 L400.30 502.8 L400.55 502.2 L400.80 501.5 L401.05 500.8 L401.30 500.1 L401.55 499.3 L401.80 498.5 L402.05 488.0 L402.30 488.0 L402.55 488.0 L402.80 488.0 L403.05 488.0 L403.30 493.3 L403.55 492.2 L403.80 491.0 L404.05 489.7 L404.30 488.4 L404.55 486.9 L404.80 485.2 L405.05 483.3 L405.30 481.2 L405.55 478.6 L405.80 475.5 L406.05 471.5 L406.30 465.8 L406.55 456.1 L406.80 437.3 L407.05 437.3 L407.30 437.3 L407.55 437.3 L407.80 437.3 L408.05 458.0 L408.30 466.8 L408.55 472.1 L408.80 476.0 L409.05 479.0 L409.30 481.5 L409.55 483.6 L409.80 485.5 L410.05 487.1 L410.30 488.6 L410.55 489.9 L410.80 491.2 L411.05 492.3 L411.30 493.4 L411.55 494.4 L411.80 495.4 L412.05 496.3 L412.30 497.1 L412.55 497.9 L412.80 498.7 L413.05 499.4 L413.30 500.2 L413.55 500.9 L413.80 501.6 L414.05 502.2 L414.30 502.9 L414.55 503.5 L414.80 504.1 L415.05 504.7 L415.30 505.3 L415.55 505.7 L415.80 506.2 L416.05 506.9 L416.30 507.3 L416.55 507.8 L416.80 508.2 L417.05 508.6 L417.30 509.0 L417.55 509.4 L417.80 509.7 L418.05 510.1 L418.30 510.6 L418.55 511.0 L418.80 511.5 L419.05 512.0 L419.30 512.4 L419.55 512.8 L419.80 513.1 L420.05 513.5 L420.30 514.0 L420.55 514.4 L420.80 514.7 L421.05 515.0 L421.30 515.2 L421.55 515.3 L421.80 515.4 L422.05 515.5 L422.30 515.8 L422.55 516.2 L422.80 510.1 L423.05 510.1 L423.30 510.1 L423.55 510.0 L423.80 509.9 L424.05 516.6 L424.30 516.8 L424.55 517.3 L424.80 517.8 L425.05 518.3 L425.30 518.7 L425.55 519.2 L425.80 519.1 L426.05 519.0 L426.30 518.9 L426.55 519.1 L426.80 519.3 L427.05 519.5 L427.30 519.5 L427.55 519.5 L427.80 519.7 L428.05 520.1 L428.30 520.4 L428.55 521.0 L428.80 521.6 L429.05 522.2 L429.30 521.7 L429.55 521.2 L429.80 520.6 L430.05 520.5 L430.30 520.3 L430.55 510.8 L430.80 510.9 L431.05 511.0 L431.30 510.9 L431.55 510.6 L431.80 518.1 L432.05 518.0 L432.30 518.1 L432.55 518.1 L432.80 518.3 L433.05 518.4 L433.30 518.3 L433.55 517.6 L433.80 516.9 L434.05 516.2 L434.30 515.6 L434.55 515.0 L434.80 514.4 L435.05 513.7 L435.30 512.9 L435.55 511.9 L435.80 510.8 L436.05 509.6 L436.30 508.3 L436.55 506.8 L436.80 505.0 L437.05 503.0 L437.30 500.5 L437.55 497.4 L437.80 493.4 L438.05 487.6 L438.30 477.7 L438.55 463.6 L438.80 463.6 L439.05 463.6 L439.30 463.6 L439.55 463.6 L439.80 481.3 L440.05 489.5 L440.30 494.6 L440.55 498.3 L440.80 501.2 L441.05 503.5 L441.30 505.5 L441.55 507.2 L441.80 508.8 L442.05 510.2 L442.30 511.5 L442.55 512.5 L442.80 513.3 L443.05 513.9 L443.30 515.0 L443.55 516.0 L443.80 516.9 L444.05 517.4 L444.30 517.8 L444.55 518.2 L444.80 518.7 L445.05 519.1 L445.30 519.4 L445.55 519.7 L445.80 520.0 L446.05 520.6 L446.30 521.3 L446.55 521.9 L446.80 509.5 L447.05 509.5 L447.30 509.4 L447.55 509.4 L447.80 509.4 L448.05 522.1 L448.30 522.5 L448.55 522.5 L448.80 522.8 L449.05 523.2 L449.30 523.7 L449.55 523.3 L449.80 522.8 L450.05 522.1 L450.30 522.5 L450.55 522.8 L450.80 523.1 L451.05 523.4 L451.30 523.8 L451.55 524.0 L451.80 524.2 L452.05 524.3 L452.30 524.1 L452.55 523.7 L452.80 523.3 L453.05 523.2 L453.30 523.3 L453.55 523.3 L453.80 523.5 L454.05 516.7 L454.30 516.7 L454.55 516.6 L454.80 516.6 L455.05 516.5 L455.30 523.1 L455.55 523.0 L455.80 522.6 L456.05 522.0 L456.30 521.4 L456.55 522.4 L456.80 523.7 L457.05 525.1 L457.30 524.3 L457.55 523.6 L457.80 523.2 L458.05 524.3 L458.30 525.3 L458.55 525.8 L458.80 525.4 L459.05 525.0 L459.30 525.0 L459.55 525.1 L459.80 525.2 L460.05 525.1 L460.30 525.0 L460.55 524.8 L460.80 525.5 L461.05 526.2 L461.30 526.6 L461.55 525.8 L461.80 525.0 L462.05 523.9 L462.30 522.4 L462.55 514.5 L462.80 514.7 L463.05 515.3 L463.30 515.7 L463.55 515.9 L463.80 525.4 L464.05 525.5 L464.30 524.3 L464.55 522.9 L464.80 522.2 L465.05 523.7 L465.30 524.7 L465.55 524.4 L465.80 522.7 L466.05 520.7 L466.30 520.2 L466.55 520.5 L466.80 520.5 L467.05 519.8 L467.30 518.8 L467.55 517.7 L467.80 516.7 L468.05 515.4 L468.30 514.0 L468.55 512.2 L468.80 510.2 L469.05 507.6 L469.30 504.5 L469.55 500.4 L469.80 494.5 L470.05 484.1 L470.30 470.7 L470.55 470.7 L470.80 470.7 L471.05 470.7 L471.30 470.7 L471.55 489.6 L471.80 497.5 L472.05 502.4 L472.30 506.1 L472.55 508.9 L472.80 511.0 L473.05 512.5 L473.30 514.0 L473.55 515.5 L473.80 516.9 L474.05 518.2 L474.30 519.4 L474.55 520.5 L474.80 520.8 L475.05 520.9 L475.30 521.0 L475.55 521.8 L475.80 522.6 L476.05 523.1 L476.30 523.1 L476.55 523.1 L476.80 523.5 L477.05 524.1 L477.30 524.8 L477.55 520.4 L477.80 520.8 L478.05 521.1 L478.30 521.1 L478.55 521.0 L478.80 528.1 L479.05 528.0 L479.30 527.7 L479.55 527.3 L479.80 526.7 L480.05 526.0 L480.30 525.7 L480.55 525.8 L480.80 525.8 L481.05 526.2 L481.30 526.7 L481.55 527.1 L481.80 526.8 L482.05 526.5 L482.30 526.4 L482.55 527.5 L482.80 528.6 L483.05 529.4 L483.30 529.6 L483.55 529.8 L483.80 529.1 L484.05 527.8 L484.30 526.5 L484.55 526.8 L484.80 527.6 L485.05 528.3 L485.30 527.4 L485.55 520.7 L485.80 520.5 L486.05 520.9 L486.30 521.3 L486.55 521.7 L486.80 528.8 L487.05 530.2 L487.30 529.9 L487.55 528.8 L487.80 527.6 L488.05 527.7 L488.30 528.2 L488.55 528.7 L488.80 528.2 L489.05 527.7 L489.30 527.3 L489.55 527.3 L489.80 527.4 L490.05 527.5 L490.30 527.7 L490.55 527.9 L490.80 528.1 L491.05 528.3 L491.30 528.5 L491.55 528.0 L491.80 527.4 L492.05 526.7 L492.30 527.2 L492.55 527.7 L492.80 528.1 L493.05 528.4 L493.30 528.8 L493.55 529.1 L493.80 529.6 L494.05 530.0 L494.30 529.8 L494.55 529.1 L494.80 528.4 L495.05 528.2 L495.30 528.1 L495.55 528.0 L495.80 528.4 L496.05 528.7 L496.30 529.1 L496.55 529.5 L496.80 530.0 L497.05 530.0 L497.30 529.2 L497.55 528.4 L497.80 528.7 L498.05 529.9 L498.30 531.0 L498.55 530.2 L498.80 529.0 L499.05 527.7 L499.30 528.3 L499.55 528.8 L499.80 529.5 L500.05 530.8 L500.30 532.1 L500.55 532.3 L500.80 531.1 L501.05 529.8 L501.30 529.4 L501.55 529.1 L501.80 525.6 L502.05 512.4 L502.30 512.4 L502.55 512.4 L502.80 512.3 L503.05 512.3 L503.30 527.9 L503.55 528.8 L503.80 528.7 L504.05 528.9 L504.30 529.6 L504.55 530.4 L504.80 530.0 L505.05 528.8 L505.30 527.6 L505.55 527.9 L505.80 528.5 L506.05 529.1 L506.30 530.2 L506.55 531.3 L506.80 532.1 L507.05 531.6 L507.30 531.1 L507.55 530.4 L507.80 529.6 L508.05 528.8 L508.30 528.8 L508.55 529.3 L508.80 529.9 L509.05 530.9 L509.30 531.9 L509.55 533.0 L509.80 532.9 L510.05 532.8 L510.30 532.6 L510.55 531.7 L510.80 530.8 L511.05 530.2 L511.30 530.0 L511.55 529.9 L511.80 530.0 L512.05 530.4 L512.30 530.8 L512.55 531.0 L512.80 531.1 L513.05 531.1 L513.30 531.1 L513.55 531.1 L513.80 531.2 L514.05 531.5 L514.30 531.8 L514.55 531.8 L514.80 531.3 L515.05 530.8 L515.30 530.4 L515.55 530.1 L515.80 529.7 L516.05 528.9 L516.30 527.9 L516.55 527.0 L516.80 528.7 L517.05 530.4 L517.30 531.5 L517.55 529.9 L517.80 528.4 L518.05 528.3 L518.30 530.5 L518.55 532.7 L518.80 533.8 L519.05 534.1 L519.30 534.5 L519.55 533.0 L519.80 531.0 L520.05 529.0 L520.30 529.9 L520.55 530.8 L520.80 531.5 L521.05 531.8 L521.30 532.1 L521.55 532.4 L521.80 532.7 L522.05 533.0 L522.30 533.2 L522.55 533.2 L522.80 533.3 L523.05 533.2 L523.30 533.1 L523.55 533.0 L523.80 531.1 L524.05 529.2 L524.30 528.0 L524.55 529.8 L524.80 531.6 L525.05 532.2 L525.30 531.0 L525.55 529.8 L525.80 530.1 L526.05 531.3 L526.30 532.6 L526.55 532.2 L526.80 531.3 L527.05 530.4 L527.30 530.3 L527.55 530.1 L527.80 530.0 L528.05 530.3 L528.30 530.5 L528.55 530.9 L528.80 531.2 L529.05 531.6 L529.30 532.0 L529.55 532.4 L529.80 532.8 L530.05 532.3 L530.30 531.7 L530.55 531.0 L530.80 530.1 L531.05 529.1 L531.30 528.6 L531.55 529.9 L531.80 531.1 L532.05 531.6 L532.30 531.0 L532.55 530.4 L532.80 530.3 L533.05 530.4 L533.30 529.7 L533.55 524.3 L533.80 510.9 L534.05 510.9 L534.30 510.9 L534.55 510.9 L534.80 510.9 L535.05 529.7 L535.30 531.8 L535.55 531.9 L535.80 530.6 L536.05 529.2 L536.30 529.3 L536.55 530.5 L536.80 531.7 L537.05 531.7 L537.30 531.5 L537.55 531.3 L537.80 531.0 L538.05 530.7 L538.30 530.5 L538.55 530.8 L538.80 531.2 L539.05 531.8 L539.30 532.6 L539.55 533.4 L539.80 533.0 L540.05 531.9 L540.30 530.8 L540.55 531.5 L540.80 532.6 L541.05 533.7 L541.30 532.7 L541.55 531.7 L541.80 531.1 L542.05 532.1 L542.30 533.0 L542.55 533.4 L542.80 532.8 L543.05 532.2 L543.30 531.6 L543.55 531.0 L543.80 530.4 L544.05 531.0 L544.30 532.0 L544.55 532.9 L544.80 532.9 L545.05 532.8 L545.30 532.9 L545.55 533.2 L545.80 533.6 L546.05 533.5 L546.30 532.6 L546.55 531.7 L546.80 531.2 L547.05 530.9 L547.30 530.6 L547.55 530.9 L547.80 531.3 L548.05 531.7 L548.30 531.5 L548.55 531.2 L548.80 531.2 L549.05 532.5 L549.30 533.9 L549.55 534.1 L549.80 532.5 L550.05 530.9 L550.30 530.2 L550.55 530.2 L550.80 530.1 L551.05 529.5 L551.30 528.7 L551.55 527.9 L551.80 529.2 L552.05 530.5 L552.30 531.5 L552.55 531.4 L552.80 531.3 L553.05 531.9 L553.30 533.5 L553.55 535.1 L553.80 535.1 L554.05 534.1 L554.30 533.1 L554.55 533.6 L554.80 534.5 L555.05 535.3 L555.30 534.3 L555.55 533.3 L555.80 532.7 L556.05 533.7 L556.30 534.6 L556.55 534.9 L556.80 534.0 L557.05 533.2 L557.30 532.6 L557.55 532.1 L557.80 531.6 L558.05 532.1 L558.30 532.8 L558.55 533.5 L558.80 533.7 L559.05 534.0 L559.30 534.1 L559.55 533.7 L559.80 533.3 L560.05 532.9 L560.30 532.4 L560.55 532.0 L560.80 532.1 L561.05 532.7 L561.30 533.2 L561.55 533.2 L561.80 533.1 L562.05 533.0 L562.30 532.1 L562.55 531.3 L562.80 530.7 L563.05 531.5 L563.30 532.4 L563.55 532.9 L563.80 532.9 L564.05 532.9 L564.30 532.9 L564.55 532.9 L564.80 532.8 L565.05 533.0 L565.30 532.3 L565.55 525.2 L565.80 524.9 L566.05 524.7 L566.30 524.6 L566.55 525.0 L566.80 534.1 L567.05 534.4 L567.30 533.1 L567.55 531.8 L567.80 532.1 L568.05 533.5 L568.30 534.9 L568.55 533.8 L568.80 532.0 L569.05 530.3 L569.30 530.3 L569.55 530.4 L569.80 530.6 L570.05 531.4 L570.30 532.1 L570.55 532.7 L570.80 533.2 L571.05 533.6 L571.30 533.4 L571.55 532.7 L571.80 532.1 L572.05 532.4 L572.30 533.1 L572.55 533.7 L572.80 534.7 L573.05 535.8 L573.30 536.1 L573.55 533.8 L573.80 531.4 L574.05 530.4 L574.30 531.4 L574.55 532.3 L574.80 533.1 L575.05 533.8 L575.30 534.4 L575.55 534.8 L575.80 535.1 L576.05 535.4 L576.30 534.4 L576.55 533.4 L576.80 532.6 L577.05 532.6 L577.30 532.6 L577.55 532.7 L577.80 533.1 L578.05 533.4 L578.30 533.6 L578.55 533.7 L578.80 533.8 L579.05 534.3 L579.30 535.0 L579.55 535.7 L579.80 534.2 L580.05 532.6 L580.30 531.7 L580.55 533.2 L580.80 534.8 L581.05 535.1 L581.30 533.7 L581.55 532.2 L581.80 532.5 L582.05 534.0 L582.30 535.5 L582.55 535.0 L582.80 533.9 L583.05 532.9 L583.30 533.1 L583.55 533.2 L583.80 533.2 L584.05 532.6 L584.30 532.1 L584.55 531.5 L584.80 531.0 L585.05 530.5 L585.30 531.1 L585.55 532.3 L585.80 533.6 L586.05 533.8 L586.30 533.8 L586.55 533.8 L586.80 534.1 L587.05 534.4 L587.30 534.8 L587.55 535.8 L587.80 536.7 L588.05 536.6 L588.30 534.8 L588.55 533.0 L588.80 532.9 L589.05 534.1 L589.30 535.3 L589.55 534.6 L589.80 533.4 L590.05 532.2 L590.30 533.1 L590.55 533.9 L590.80 534.3 L591.05 532.9 L591.30 531.5 L591.55 530.8 L591.80 531.2 L592.05 531.7 L592.30 532.1 L592.55 532.6 L592.80 533.1 L593.05 533.2 L593.30 533.2 L593.55 533.1 L593.80 534.8 L594.05 536.5 L594.30 537.4 L594.55 535.3 L594.80 533.3 L595.05 532.1 L595.30 531.9 L595.55 531.8 L595.80 531.6 L596.05 531.4 L596.30 531.1 L596.55 531.6 L596.80 532.4 L597.05 533.1 L597.30 532.9 L597.55 532.7 L597.80 532.4 L598.05 531.6 L598.30 530.8 L598.55 530.7 L598.80 531.4 L599.05 532.1 L599.30 533.3 L599.55 534.7 L599.80 536.0 L600.05 535.2 L600.30 533.8 L600.55 532.4 L600.80 532.9 L601.05 533.3 L601.30 533.5 L601.55 533.0 L601.80 532.4 L602.05 532.6 L602.30 534.0 L602.55 535.3 L602.80 535.6 L603.05 535.3 L603.30 534.9 L603.55 535.7 L603.80 536.8 L604.05 537.8 L604.30 537.8 L604.55 537.8 L604.80 537.5 L605.05 536.2 L605.30 535.0 L605.55 534.0 L605.80 533.6 L606.05 533.2 L606.30 533.1 L606.55 533.2 L606.80 533.3 L607.05 533.7 L607.30 534.2 L607.55 534.7 L607.80 533.8 L608.05 533.0 L608.30 532.5 L608.55 533.3 L608.80 534.2 L609.05 534.8 L609.30 534.9 L609.55 535.1 L609.80 535.0 L610.05 534.9 L610.30 534.7 L610.55 534.4 L610.80 534.0 L611.05 533.6 L611.30 532.5 L611.55 531.4 L611.80 530.6 L612.05 530.8 L612.30 531.0 L612.55 531.7 L612.80 533.3 L613.05 534.9 L613.30 534.7 L613.55 533.3 L613.80 531.9 L614.05 532.2 L614.30 533.0 L614.55 533.8 L614.80 534.9 L615.05 535.9 L615.30 536.5 L615.55 535.1 L615.80 533.7 L616.05 533.4 L616.30 535.0 L616.55 536.6 L616.80 536.6 L617.05 535.6 L617.30 534.5 L617.55 534.4 L617.80 534.4 L618.05 534.4 L618.30 534.3 L618.55 534.2 L618.80 534.1 L619.05 533.9 L619.30 533.7 L619.55 533.3 L619.80 532.5 L620.05 531.8 L620.30 532.6 L620.55 534.5 L620.80 536.4 L621.05 536.5 L621.30 536.1 L621.55 535.7 L621.80 536.3 L622.05 536.9 L622.30 537.1 L622.55 535.5 L622.80 534.0 L623.05 533.1 L623.30 533.3 L623.55 533.4 L623.80 534.0 L624.05 534.8 L624.30 535.6 L624.55 534.5 L624.80 533.0 L625.05 531.5 L625.30 532.3 L625.55 533.0 L625.80 533.5 L626.05 532.9 L626.30 532.3 L626.55 531.9 L626.80 531.9 L627.05 531.9 L627.30 532.9 L627.55 534.6 L627.80 536.3 L628.05 535.5 L628.30 534.2 L628.55 532.9 L628.80 533.8 L629.05 534.8 L629.30 535.1 L629.55 533.2 L629.80 531.4 L630.05 531.0 L630.30 533.0 L630.55 535.1 L630.80 535.1 L631.05 533.8 L631.30 532.4 L631.55 533.2 L631.80 534.5 L632.05 535.7 L632.30 534.4 L632.55 533.0 L632.80 532.1 L633.05 533.1 L633.30 534.2 L633.55 535.3 L633.80 536.4 L634.05 537.5 L634.30 536.9 L634.55 535.1 L634.80 533.4 L635.05 534.9 L635.30 537.1 L635.55 539.4 L635.80 538.0 L636.05 536.5 L636.30 535.2 L636.55 535.0 L636.80 534.8 L637.05 534.7 L637.30 534.6 L637.55 534.5 L637.80 534.3 L638.05 534.0 L638.30 533.8 L638.55 533.8 L638.80 533.9 L639.05 533.9 L639.30 535.7 L639.55 537.5 L639.80 538.9 L640.05 539.2 L640.30 539.5 L640.55 538.9 L640.80 536.9 L641.05 534.9 L641.30 534.1 L641.55 534.0 L641.80 534.0 L642.05 534.1 L642.30 534.2 L642.55 534.3 L642.80 534.7 L643.05 535.0 L643.30 535.6 L643.55 537.0 L643.80 538.3 L644.05 537.8 L644.30 534.4 L644.55 530.9 L644.80 531.0 L645.05 533.5 L645.30 536.0 L645.55 536.2 L645.80 535.9 L646.05 535.6 L646.30 536.6 L646.55 537.7 L646.80 538.3 L647.05 537.6 L647.30 536.8 L647.55 536.0 L647.80 535.1 L648.05 534.3 L648.30 534.1 L648.55 534.3 L648.80 534.5 L649.05 534.2 L649.30 533.8 L649.55 533.3 L649.80 534.7 L650.05 536.0 L650.30 537.0 L650.55 536.6 L650.80 536.2 L651.05 536.0 L651.30 536.2 L651.55 536.3 L651.80 535.8 L652.05 534.7 L652.30 533.6 L652.55 535.2 L652.80 537.4 L653.05 539.7 L653.30 538.3 L653.55 537.0 L653.80 535.8 L654.05 534.9 L654.30 534.0 L654.55 534.0 L654.80 535.4 L655.05 536.8 L655.30 536.4 L655.55 534.8 L655.80 533.2 L656.05 533.1 L656.30 533.2 L656.55 533.4 L656.80 534.0 L657.05 534.6 L657.30 535.2 L657.55 535.9 L657.80 536.5 L658.05 536.6 L658.30 536.0 L658.55 535.4 L658.80 534.9 L659.05 534.4 L659.30 533.9 L659.55 534.0 L659.80 534.1 L660.05 534.3 L660.30 535.1 L660.55 535.9 L660.80 536.3 L661.05 535.4 L661.30 534.5 L661.55 534.0 L661.80 534.0 L662.05 534.0 L662.30 534.6 L662.55 535.8 L662.80 537.0 L663.05 536.8 L663.30 536.2 L663.55 535.6 L663.80 535.6 L664.05 535.5 L664.30 535.4 L664.55 535.7 L664.80 535.9 L665.05 536.0 L665.30 535.8 L665.55 535.6 L665.80 535.0 L666.05 534.0 L666.30 533.1 L666.55 534.7 L666.80 537.1 L667.05 539.4 L667.30 537.9 L667.55 536.4 L667.80 535.3 L668.05 535.5 L668.30 535.8 L668.55 535.9 L668.80 535.9 L669.05 535.9 L669.30 536.3 L669.55 536.9 L669.80 537.6 L670.05 536.9 L670.30 536.0 L670.55 535.0 L670.80 535.4 L671.05 535.7 L671.30 536.0 L671.55 536.1 L671.80 536.1 L672.05 536.3 L672.30 536.6 L672.55 536.9 L672.80 536.7 L673.05 536.2 L673.30 535.6 L673.55 536.4 L673.80 537.6 L674.05 538.7 L674.30 537.4 L674.55 536.0 L674.80 534.9 L675.05 535.1 L675.30 535.3 L675.55 535.4 L675.80 535.6 L676.05 535.7 L676.30 535.4 L676.55 534.9 L676.80 534.3 L677.05 534.6 L677.30 535.1 L677.55 535.6 L677.80 534.8 L678.05 534.0 L678.30 533.4 L678.55 534.2 L678.80 534.9 L679.05 535.4 L679.30 535.5 L679.55 535.5 L679.80 535.9 L680.05 536.4 L680.30 536.9 L680.55 536.5 L680.80 536.0 L681.05 535.5 L681.30 535.5 L681.55 535.5 L681.80 535.5 L682.05 535.3 L682.30 535.1 L682.55 535.3 L682.80 536.0 L683.05 536.8 L683.30 536.7 L683.55 536.1 L683.80 535.4 L684.05 535.3 L684.30 535.4 L684.55 535.4 L684.80 536.0 L685.05 536.6 L685.30 537.2 L685.55 538.3 L685.80 539.3 L686.05 539.0 L686.30 536.7 L686.55 534.5 L686.80 533.9 L687.05 534.5 L687.30 535.0 L687.55 535.7 L687.80 536.3 L688.05 536.9 L688.30 535.9 L688.55 534.8 L688.80 533.9 L689.05 533.8 L689.30 533.7 L689.55 534.1 L689.80 535.2 L690.05 536.3 L690.30 536.8 L690.55 536.9 L690.80 537.0 L691.05 536.7 L691.30 536.3 L691.55 535.9 L691.80 536.1 L692.05 536.2 L692.30 536.3 L692.55 536.4 L692.80 536.4 L693.05 536.1 L693.30 535.5 L693.55 534.8 L693.80 534.5 L694.05 534.4 L694.30 534.3 L694.55 534.0 L694.80 533.7 L695.05 533.4 L695.30 534.3 L695.55 535.3 L695.80 535.9 L696.05 535.1 L696.30 534.4 L696.55 534.5 L696.80 536.1 L697.05 537.7 L697.30 537.7 L697.55 536.6 L697.80 535.5 L698.05 535.7 L698.30 536.1 L698.55 536.5 L698.80 536.4 L699.05 536.3 L699.30 536.3 L699.55 536.6 L699.80 537.0 L700.05 537.0 L700.30 536.6 L700.55 536.3 L700.80 535.8 L701.05 535.4 L701.30 534.9 L701.55 535.8 L701.80 537.2 L702.05 538.5 L702.30 537.3 L702.55 536.0 L702.80 535.0 L703.05 535.0 L703.30 535.0 L703.55 535.1 L703.80 535.3 L704.05 535.6 L704.30 535.9 L704.55 536.2 L704.80 536.5 L705.05 536.4 L705.30 536.2 L705.55 536.0 L705.80 536.4 L706.05 536.8 L706.30 537.1 L706.55 536.8 L706.80 536.6 L707.05 536.7 L707.30 537.4 L707.55 538.1 L707.80 538.2 L708.05 537.9 L708.30 537.6 L708.55 538.2 L708.80 539.0 L709.05 539.8 L709.30 538.7 L709.55 537.6 L709.80 536.9 L710.05 537.2 L710.30 537.5 L710.55 538.0 L710.80 538.6 L711.05 539.3 L711.30 538.7 L711.55 537.3 L711.80 535.9 L712.05 535.6 L712.30 535.4 L712.55 535.3 L712.80 536.5 L713.05 537.7 L713.30 538.8 L713.55 539.4 L713.80 540.0 L714.05 539.7 L714.30 537.9 L714.55 536.2 L714.80 536.9 L715.05 539.2 L715.30 541.5 L715.55 541.2 L715.80 540.2 L716.05 539.3 L716.30 539.8 L716.55 540.2 L716.80 540.3 L717.05 538.6 L717.30 536.9 L717.55 535.6 L717.80 535.1 L718.05 534.5 L718.30 534.6 L718.55 535.2 L718.80 535.8 L719.05 535.9 L719.30 535.9 L719.55 536.0 L719.80 536.5 L720.05 537.1 L720.30 537.6 L720.55 537.8 L720.80 538.0 L721.05 538.1 L721.30 538.0 L721.55 538.0 L721.80 538.5 L722.05 539.5 L722.30 540.6 L722.55 540.1 L722.80 539.3 L723.05 538.4 L723.30 537.2 L723.55 535.9 L723.80 535.2 L724.05 536.7 L724.30 538.1 L724.55 538.6 L724.80 537.4 L725.05 536.3 L725.30 536.1 L725.55 536.6 L725.80 537.1 L726.05 536.4 L726.30 535.4 L726.55 534.5 L726.80 534.9 L727.05 535.4 L727.30 536.1 L727.55 537.6 L727.80 539.1 L728.05 539.7 L728.30 539.0 L728.55 538.3 L728.80 537.8 L729.05 537.6 L729.30 537.4 L729.55 538.0 L729.80 538.8 L730.05 539.6 L730.30 537.6 L730.55 535.5 L730.80 534.0 L731.05 534.7 L731.30 535.3 L731.55 536.0 L731.80 536.7 L732.05 537.3 L732.30 538.4 L732.55 539.7 L732.80 541.0 L733.05 540.6 L733.30 539.7 L733.55 538.9 L733.80 538.2 L734.05 537.5 L734.30 537.0 L734.55 537.1 L734.80 537.2 L735.05 537.6 L735.30 538.4 L735.55 539.2 L735.80 539.2 L736.05 538.6 L736.30 537.9 L736.55 537.6 L736.80 537.4 L737.05 537.1 L737.30 537.0 L737.55 536.9 L737.80 536.8 L738.05 536.3 L738.30 535.9 L738.55 535.6 L738.80 535.7 L739.05 535.8 L739.30 536.6 L739.55 538.0 L739.80 539.4 L740.05 538.2 L740.30 536.3 L740.55 534.4 L740.80 535.8 L741.05 537.2 L741.30 538.4 L741.55 538.7 L741.80 539.1 L742.05 538.8 L742.30 537.6 L742.55 536.5 L742.80 536.0 L743.05 535.9 L743.30 535.8 L743.55 535.1 L743.80 534.4 L744.05 533.6 L744.30 536.3 L744.55 538.9 L744.80 540.8 L745.05 539.7 L745.30 538.6 L745.55 537.9 L745.80 537.8 L746.05 537.7 L746.30 537.5 L746.55 537.3 L746.80 537.0 L747.05 537.2 L747.30 537.4 L747.55 537.7 L747.80 538.0 L748.05 538.3 L748.30 538.3 L748.55 537.2 L748.80 536.0 L749.05 535.3 L749.30 535.3 L749.55 535.3 L749.80 535.0 L750.05 534.5 L750.30 533.9 L750.55 534.5 L750.80 535.4 L751.05 536.3 L751.30 536.4 L751.55 536.6 L751.80 536.8 L752.05 537.6 L752.30 538.3 L752.55 538.5 L752.80 537.9 L753.05 537.2 L753.30 537.9 L753.55 539.3 L753.80 540.8 L754.05 539.4 L754.30 537.2 L754.55 535.1 L754.80 536.4 L755.05 537.8 L755.30 538.9 L755.55 538.7 L755.80 538.5 L756.05 537.8 L756.30 536.4 L756.55 534.9 L756.80 535.0 L757.05 536.0 L757.30 537.0 L757.55 538.2 L757.80 539.5 L758.05 540.8 L758.30 539.2 L758.55 537.6 L758.80 536.6 L759.05 538.2 L759.30 539.8 L759.55 540.3 L759.80 539.0 L760.05 537.8 L760.30 537.4 L760.55 537.7 L760.80 538.0 L761.05 538.4 L761.30 538.9 L761.55 539.4 L761.80 538.7 L762.05 538.0 L762.30 537.4 L762.55 536.9 L762.80 536.5 L763.05 536.2 L763.30 536.1 L763.55 536.0 L763.80 536.6 L764.05 537.6 L764.30 538.7 L764.55 538.4 L764.80 537.8 L765.05 537.2 L765.30 535.7 L765.55 534.2 L765.80 533.4 L766.05 535.5 L766.30 537.6 L766.55 538.4 L766.80 537.2 L767.05 536.1 L767.30 535.4 L767.55 535.0 L767.80 534.6 L768.05 535.0 L768.30 535.6 L768.55 536.2 L768.80 536.8 L769.05 537.3 L769.30 537.6 L769.55 537.1 L769.60 536.7 L769.60 561.4 Z" fill="#b2ffff"/>
<rect x="386" y="412" width="28.2" height="160" fill="#000" fill-opacity="0.065"/>
<rect x="390.6" y="419.7" width="23" height="22.6" rx="4" fill="none" stroke="#fff" stroke-opacity="0.17" stroke-width="1"/>
<rect x="390.6" y="451.5" width="23" height="22.6" rx="4" fill="none" stroke="#fff" stroke-opacity="0.17" stroke-width="1"/>
<rect x="390.6" y="483.3" width="23" height="22.6" rx="4" fill="none" stroke="#fff" stroke-opacity="0.17" stroke-width="1"/>
<rect x="390.6" y="515.1" width="23" height="22.6" rx="4" fill="none" stroke="#fff" stroke-opacity="0.17" stroke-width="1"/>
<rect x="390.6" y="546.9" width="23" height="22.6" rx="4" fill="none" stroke="#fff" stroke-opacity="0.17" stroke-width="1"/>
<path d="M395 430 L398 436 L402 424" fill="none" stroke="#808080" stroke-opacity="0.35" stroke-width="1.2"/>
<path d="M395 469 V458 L398 460 L401 457 L405 460 L409 457 V469 Z" fill="none" stroke="#808080" stroke-opacity="0.35" stroke-width="1"/>
<text x="365.8" y="409.47" font-size="13.33" fill="#f2f2f2" text-anchor="end">0</text>
<text x="365.8" y="441.01" font-size="13.33" fill="#f2f2f2" text-anchor="end">-20</text>
<text x="365.8" y="472.55" font-size="13.33" fill="#f2f2f2" text-anchor="end">-40</text>
<text x="365.8" y="504.09" font-size="13.33" fill="#f2f2f2" text-anchor="end">-60</text>
<text x="365.8" y="535.63" font-size="13.33" fill="#f2f2f2" text-anchor="end">-80</text>
<text x="365.8" y="567.17" font-size="13.33" fill="#f2f2f2" text-anchor="end">-100</text>
<text x="375.70" y="582.5" font-size="13.33" fill="#f2f2f2" text-anchor="middle">0</text>
<text x="441.53" y="582.5" font-size="13.33" fill="#f2f2f2" text-anchor="middle">500</text>
<text x="507.37" y="582.5" font-size="13.33" fill="#f2f2f2" text-anchor="middle">1000</text>
<text x="573.20" y="582.5" font-size="13.33" fill="#f2f2f2" text-anchor="middle">1500</text>
<text x="639.03" y="582.5" font-size="13.33" fill="#f2f2f2" text-anchor="middle">2000</text>
<text x="704.87" y="582.5" font-size="13.33" fill="#f2f2f2" text-anchor="middle">2500</text>
<text x="770.70" y="582.5" font-size="13.33" fill="#f2f2f2" text-anchor="middle">3000</text>
<text x="572.5" y="596" font-size="13.33" fill="#f2f2f2" text-anchor="middle">Частота [Гц]</text>
<text x="546" y="397" font-size="13.33" fill="#f2f2f2" text-anchor="middle">Спектр</text>
<text transform="translate(330 484) rotate(-90)" font-size="13.33" fill="#f2f2f2" text-anchor="middle">Амплитуда [дБ]</text>
<circle cx="304" cy="339.5" r="2.5" fill="none" stroke="#c4c4c4" stroke-width="1"/><circle cx="553" cy="373" r="2.5" fill="none" stroke="#c4c4c4" stroke-width="1"/>
</svg>
<div id="status"></div>
<svg class="abs" style="left:0;top:600px" width="800" height="30" viewBox="0 600 800 30"><rect x="790.5" y="613.4" width="2" height="2" fill="#606060"/><rect x="786.5" y="617.4" width="2" height="2" fill="#606060"/><rect x="790.5" y="617.4" width="2" height="2" fill="#606060"/><rect x="782.5" y="621.5" width="2" height="2" fill="#606060"/><rect x="786.5" y="621.5" width="2" height="2" fill="#606060"/><rect x="790.5" y="621.5" width="2" height="2" fill="#606060"/></svg>
<svg id="frame" width="800" height="630" viewBox="0 0 800 630"><path d="M0.95 31 V623.5 Q0.95 629.3 6.8 629.3" fill="none" stroke="#0b8df5" stroke-width="1.9"/><path d="M6.8 629.3 H793.4 Q799.25 629.3 799.25 623.5 V31" fill="none" stroke="#0b8df5" stroke-width="1.5"/></svg>
</div>
</body>
</html>
